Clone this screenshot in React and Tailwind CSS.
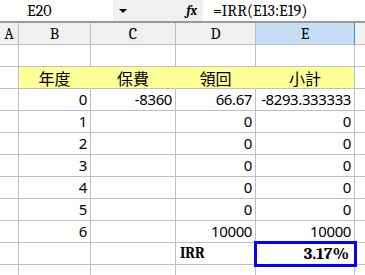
import React from 'react'

const serif = 'font-serif'
const sans = 'font-sans'
const cjk = "font-['Noto_Sans_CJK_TC']"

const rows = [
  ['0', '-8360', '66.67', '-8293.333333'],
  ['1', '', '0', '0'],
  ['2', '', '0', '0'],
  ['3', '', '0', '0'],
  ['4', '', '0', '0'],
  ['5', '', '0', '0'],
  ['6', '', '10000', '10000'],
]

const cols = 'grid grid-cols-[19px_72px_85px_80px_99px_1fr]'
const cell = 'h-[22px] border-r border-b border-[#c0c0c0] flex items-center'

export default function App() {
  return (
    <div className="w-[365px] h-[275px] bg-white overflow-hidden text-black">
      {/* formula bar */}
      <div className="flex h-[23px] border-b-2 border-[#9a9a9a]">
        <div className={`w-[113px] pl-[27px] flex items-center text-[16px] ${serif}`}>E20</div>
        <div className="w-[90px] bg-[#f0f0f0] flex items-center justify-between pl-[6px] pr-[6px]">
          <div className="w-0 h-0 border-l-[4px] border-r-[4px] border-t-[4px] border-l-transparent border-r-transparent border-t-black" />
          <span className={`italic font-bold text-[13px] ${serif}`}>fx</span>
        </div>
        <div className={`flex-1 pl-[10px] flex items-center text-[16px] ${serif}`}>=IRR(E13:E19)</div>
      </div>

      {/* column headers */}
      <div className={`${cols} text-[16px] ${serif}`}>
        <div className={`${cell} justify-center bg-[#f0f0f0]`}>A</div>
        <div className={`${cell} justify-center bg-[#f0f0f0]`}>B</div>
        <div className={`${cell} justify-center bg-[#f0f0f0]`}>C</div>
        <div className={`${cell} justify-center bg-[#f0f0f0]`}>D</div>
        <div className={`${cell} justify-center bg-[#c5def6] border-r-[#3c8ce6]`}>E</div>
        <div className={`${cell} bg-[#f0f0f0] border-r-0`} />
      </div>

      {/* blank row */}
      <div className={cols}>
        <div className={cell} />
        <div className={cell} />
        <div className={cell} />
        <div className={cell} />
        <div className={cell} />
        <div className={`${cell} border-r-0`} />
      </div>

      {/* title row */}
      <div className={`${cols} text-[16px] ${cjk}`}>
        <div className={cell} />
        <div className={`${cell} justify-center bg-[#ffff99] border-r-[#ffff99]`}>年度</div>
        <div className={`${cell} justify-center bg-[#ffff99] border-r-[#ffff99]`}>保費</div>
        <div className={`${cell} justify-center bg-[#ffff99] border-r-[#ffff99]`}>領回</div>
        <div className={`${cell} justify-center bg-[#ffff99]`}>小計</div>
        <div className={`${cell} border-r-0`} />
      </div>

      {rows.map((r, i) => (
        <div key={i} className={`${cols} text-[15px] tracking-[-0.4px] ${sans}`}>
          <div className={cell} />
          {r.map((v, j) => (
            <div key={j} className={`${cell} justify-end pr-[3px]`}>{v}</div>
          ))}
          <div className={`${cell} border-r-0`} />
        </div>
      ))}

      {/* IRR row */}
      <div className={`${cols} font-bold ${serif}`}>
        <div className={cell} />
        <div className={cell} />
        <div className={cell} />
        <div className={`${cell} pl-[4px] text-[15px]`}>IRR</div>
        <div className={`${cell} relative justify-end pr-[5px] text-[17px]`}>
          3.17%
          <div className="absolute left-[-2px] right-[-3px] top-[-2px] bottom-[-3px] border-[3px] border-[#0000ff]" />
        </div>
        <div className={`${cell} border-r-0`} />
      </div>

      <div className={cols}>
        <div className={cell} />
        <div className={cell} />
        <div className={cell} />
        <div className={cell} />
        <div className={cell} />
        <div className={`${cell} border-r-0`} />
      </div>
    </div>
  )
}
